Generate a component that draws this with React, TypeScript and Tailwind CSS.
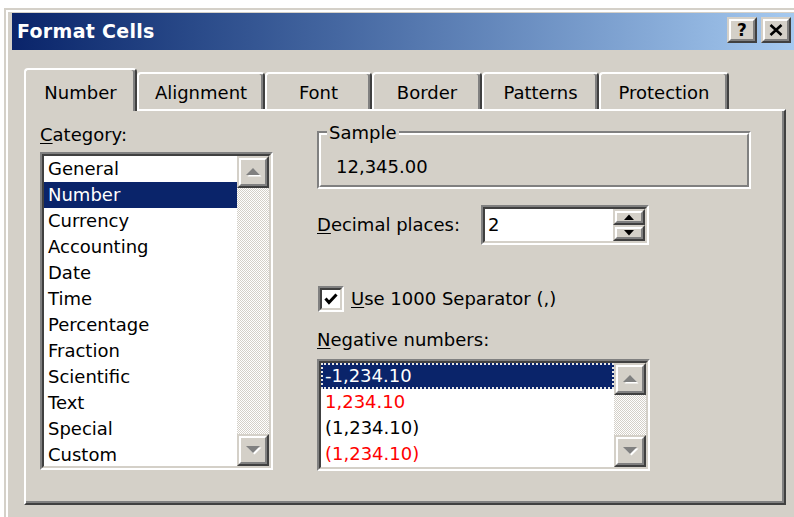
import React from "react";

type Item = { label: string; color?: string };

const categories: Item[] = [
  { label: "General" },
  { label: "Number" },
  { label: "Currency" },
  { label: "Accounting" },
  { label: "Date" },
  { label: "Time" },
  { label: "Percentage" },
  { label: "Fraction" },
  { label: "Scientific" },
  { label: "Text" },
  { label: "Special" },
  { label: "Custom" },
];

const negatives: Item[] = [
  { label: "-1,234.10" },
  { label: "1,234.10", color: "red" },
  { label: "(1,234.10)" },
  { label: "(1,234.10)", color: "red" },
];

const tabs = [
  { label: "Number", w: 113, sel: true },
  { label: "Alignment", w: 128 },
  { label: "Font", w: 107 },
  { label: "Border", w: 110 },
  { label: "Patterns", w: 117 },
  { label: "Protection", w: 130 },
];

function Raised({ className = "", children }: { className?: string; children?: React.ReactNode }) {
  return (
    <div
      className={`border-2 border-t-[#d4d0c8] border-l-[#d4d0c8] border-r-[#404040] border-b-[#404040] bg-[#d4d0c8] ${className}`}
    >
      <div className="w-full h-full border-2 border-t-white border-l-white border-r-[#808080] border-b-[#808080] flex items-center justify-center">
        {children}
      </div>
    </div>
  );
}

function Sunken({ className = "", children }: { className?: string; children?: React.ReactNode }) {
  return (
    <div
      className={`border-2 border-t-[#808080] border-l-[#808080] border-r-white border-b-white ${className}`}
    >
      <div className="w-full h-full border-2 border-t-[#404040] border-l-[#404040] border-r-[#d4d0c8] border-b-[#d4d0c8] bg-white flex overflow-hidden">
        {children}
      </div>
    </div>
  );
}

function GrayArrow({ up }: { up: boolean }) {
  const pts = up ? "1,8 8,1 15,8" : "1,1 8,8 15,1";
  return (
    <svg width="17" height="10" viewBox="0 0 17 10">
      <polygon points={pts} fill="#ffffff" transform="translate(1.5 1.5)" />
      <polygon points={pts} fill="#808080" />
    </svg>
  );
}

function BlackArrow({ up }: { up: boolean }) {
  const pts = up ? "0,6 5,0.5 10,6" : "0,0 5,5.5 10,0";
  return (
    <svg width="10" height="6" viewBox="0 0 10 6">
      <polygon points={pts} fill="#000000" />
    </svg>
  );
}

function ScrollBar() {
  return (
    <div className="w-[32px] shrink-0 flex flex-col h-full">
      <Raised className="h-[32px] w-[32px] shrink-0">
        <GrayArrow up />
      </Raised>
      <div className="flex-1 bg-[image:repeating-conic-gradient(#d4d0c8_0%_25%,#ffffff_0%_50%)] bg-[length:2px_2px]" />
      <Raised className="h-[32px] w-[32px] shrink-0">
        <GrayArrow up={false} />
      </Raised>
    </div>
  );
}

function ListBox({
  items,
  selected,
  focus,
  className,
}: {
  items: Item[];
  selected: number;
  focus?: boolean;
  className: string;
}) {
  return (
    <Sunken className={className}>
      <div className="flex-1 min-w-0 overflow-hidden">
        {items.map((it, i) => {
          const sel = i === selected;
          if (sel) {
            return (
              <div
                key={i}
                className={`h-[26px] leading-[22px] bg-[#0a246a] text-white whitespace-nowrap ${
                  focus ? "border-2 border-dotted border-[#e8e8e8] pl-[2px]" : "border-2 border-transparent pl-[2px]"
                }`}
              >
                {it.label}
              </div>
            );
          }
          return (
            <div
              key={i}
              className={`h-[26px] leading-[26px] pl-[4px] whitespace-nowrap ${
                it.color === "red" ? "text-[#ff0000]" : "text-black"
              }`}
            >
              {it.label}
            </div>
          );
        })}
      </div>
      <ScrollBar />
    </Sunken>
  );
}

export default function App() {
  return (
    <div className="w-[794px] h-[517px] overflow-hidden bg-white font-['DejaVu_Sans',sans-serif] text-[18px] text-black">
      <div className="ml-[4px] mt-[8px] w-[800px] h-[520px] border-l-2 border-t-2 border-[#d4d0c8]">
        <div className="h-full border-l-2 border-t-2 border-white bg-[#d4d0c8] pl-[4px] pt-[1px]">
          {/* caption bar */}
          <div className="h-[37px] w-[784px] flex items-start justify-between bg-linear-to-r from-[#0a246a] to-[#a6caf0] pl-[5px] pr-[5px]">
            <div className="h-[37px] leading-[37px] text-white font-bold text-[19px] tracking-[0.3px]">
              Format Cells
            </div>
            <div className="flex gap-[4px] mt-[4px]">
              <Raised className="w-[30px] h-[26px]">
                <span className="font-bold text-[17px] leading-none">?</span>
              </Raised>
              <Raised className="w-[30px] h-[26px]">
                <svg width="14" height="12" viewBox="0 0 14 12">
                  <path d="M1.5 1 L12.5 11 M12.5 1 L1.5 11" stroke="#000" strokeWidth="2.6" />
                </svg>
              </Raised>
            </div>
          </div>

          {/* tab strip */}
          <div className="mt-[18px] pl-[12px] h-[41px] flex items-end">
            {tabs.map((t) =>
              t.sel ? (
                <div
                  key={t.label}
                  style={{ width: t.w }}
                  className="relative z-10 h-[43px] mb-[-2px] bg-[#d4d0c8] border-t-2 border-l-2 border-white border-r-2 border-r-[#404040] rounded-t-[4px] shadow-[inset_-2px_0_0_#808080] flex justify-center pt-[12px] leading-[22px]"
                >
                  {t.label}
                </div>
              ) : (
                <div
                  key={t.label}
                  style={{ width: t.w }}
                  className="h-[37px] bg-[#d4d0c8] border-t-2 border-l-2 border-white border-r-2 border-r-[#404040] rounded-t-[4px] shadow-[inset_-2px_0_0_#808080] flex justify-center pt-[8px] leading-[22px]"
                >
                  {t.label}
                </div>
              )
            )}
          </div>

          {/* tab page */}
          <div className="ml-[12px] w-[762px] h-[396px] border-2 border-t-white border-l-white border-r-[#404040] border-b-[#404040] shadow-[inset_-2px_-2px_0_#808080] flex pl-[14px]">
            <div className="w-[233px] pt-[13px] flex flex-col">
              <div className="h-[22px] leading-[22px]">
                <span className="underline underline-offset-2">C</span>ategory:
              </div>
              <ListBox items={categories} selected={1} className="mt-[6px] w-[233px] h-[318px]" />
            </div>

            <div className="ml-[44px] w-[434px] pt-[20px] flex flex-col">
              {/* sample group */}
              <div className="relative w-[434px] h-[58px] border-2 border-t-[#808080] border-l-[#808080] border-r-white border-b-white">
                <div className="h-full border-2 border-t-white border-l-white border-r-[#808080] border-b-[#808080] pt-[21px] pl-[15px] leading-[22px]">
                  12,345.00
                </div>
                <div className="absolute top-[-11px] left-[8px] px-[2px] bg-[#d4d0c8] leading-[22px]">
                  Sample
                </div>
              </div>

              {/* decimal places */}
              <div className="mt-[16px] h-[40px] flex items-center">
                <div className="w-[164px] leading-[22px]">
                  <span className="underline underline-offset-2">D</span>ecimal places:
                </div>
                <Sunken className="w-[168px] h-[40px]">
                  <div className="flex-1 pl-[3px] leading-[32px]">2</div>
                  <div className="w-[32px] flex flex-col">
                    <Raised className="h-[16px] w-[32px]">
                      <BlackArrow up />
                    </Raised>
                    <Raised className="h-[16px] w-[32px]">
                      <BlackArrow up={false} />
                    </Raised>
                  </div>
                </Sunken>
              </div>

              {/* separator checkbox */}
              <div className="mt-[42px] h-[24px] flex items-center">
                <Sunken className="ml-[1px] w-[26px] h-[26px] shrink-0">
                  <div className="flex-1 flex items-center justify-center">
                    <svg width="14" height="14" viewBox="0 0 14 14">
                      <polyline points="1.5,6.5 5,10.5 12.5,2.5" fill="none" stroke="#000" strokeWidth="3" />
                    </svg>
                  </div>
                </Sunken>
                <div className="ml-[7px] leading-[22px] whitespace-nowrap">
                  <span className="underline underline-offset-2">U</span>se 1000 Separator (,)
                </div>
              </div>

              {/* negative numbers */}
              <div className="mt-[18px] h-[22px] leading-[22px]">
                <span className="underline underline-offset-2">N</span>egative numbers:
              </div>
              <ListBox items={negatives} selected={0} focus className="mt-[8px] w-[333px] h-[112px]" />
            </div>
          </div>
        </div>
      </div>
    </div>
  );
}
